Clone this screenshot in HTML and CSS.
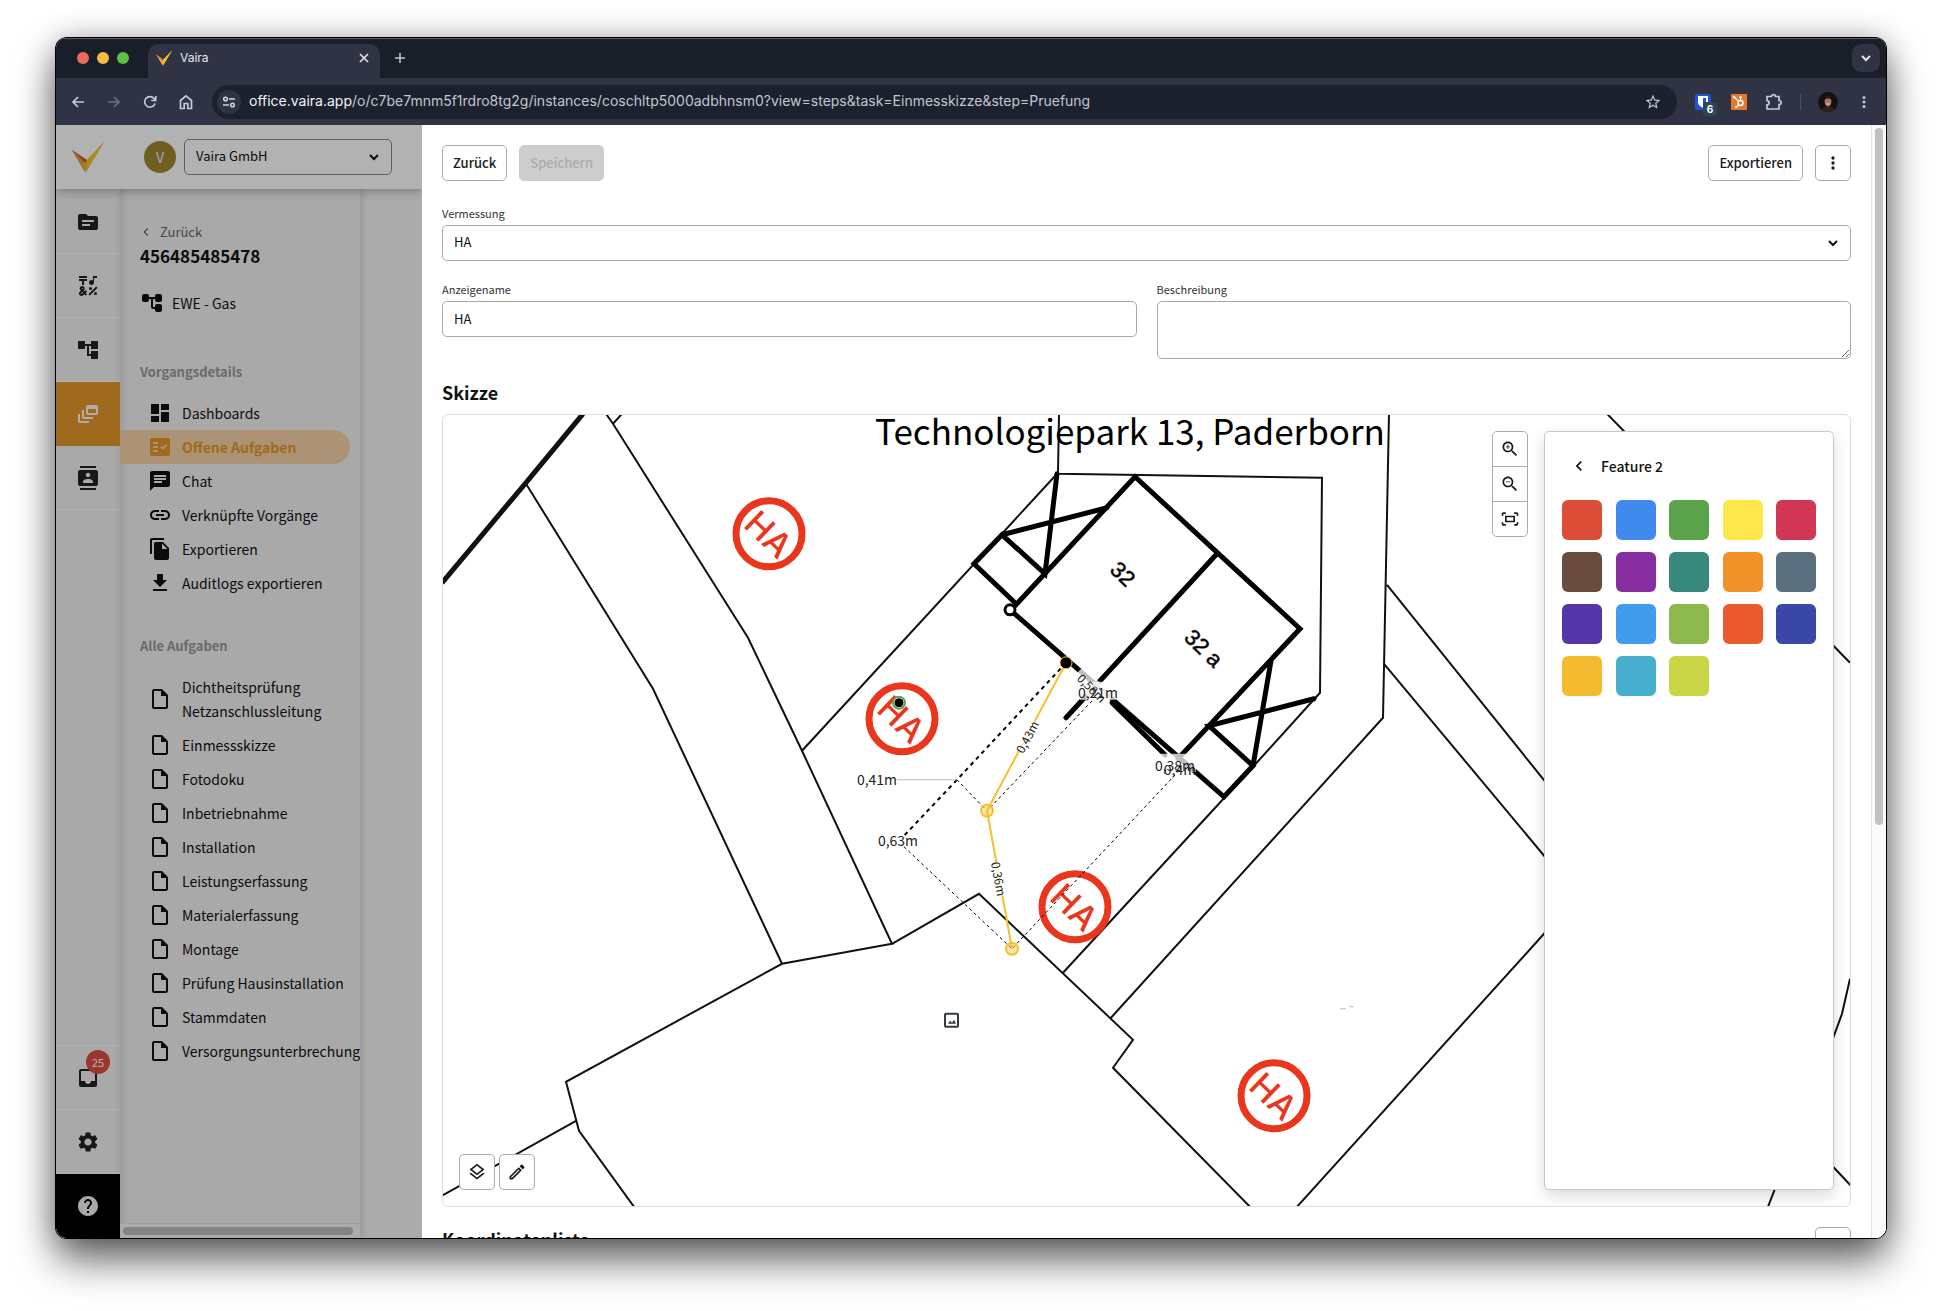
FILE: index.html
```html
<!DOCTYPE html>
<html lang="de">
<head>
<meta charset="utf-8">
<title>Vaira</title>
<meta name="viewport" content="width=device-width, initial-scale=1">
<link rel="stylesheet" href="styles.css">
</head>
<body>
<svg class="defs" aria-hidden="true">
  <linearGradient id="gold" x1="0" y1="0" x2="1" y2="1"><stop offset="0" stop-color="#d9862b"/><stop offset="1" stop-color="#f3cf3a"/></linearGradient>
  <symbol id="logo" viewBox="0 0 32 32">
    <path d="M0 9l14 13-1 9z" fill="#e0742a"/>
    <path d="M0 9l15 10 17-18-18 30z" fill="url(#gold)"/>
    <path d="M15 19L32 1 14 31z" fill="#f4c430"/>
    <path d="M0 9l15 10-2 3z" fill="#d35f35"/>
  </symbol>
  <symbol id="doc" viewBox="0 0 24 24"><path d="M14 2H6c-1.1 0-1.99.9-1.99 2L4 20c0 1.1.89 2 1.99 2H18c1.1 0 2-.9 2-2V8l-6-6zM6 20V4h7v5h5v11H6z"/></symbol>
  <symbol id="tree" viewBox="0 0 24 24"><path d="M22 11V3h-7v3H9V3H2v8h7V8h2v10h4v3h7v-8h-7v3h-2V8h2v3z"/></symbol>
  <symbol id="tree-round" viewBox="0 0 24 24"><path d="M22 9V5c0-1.100-.9-2-2-2h-3c-1.100 0-2 .9-2 2v1H9V5c0-1.100-.9-2-2-2H4c-1.100 0-2 .9-2 2v4c0 1.100.9 2 2 2h3c1.100 0 2-.9 2-2V8h2v8c0 1.100.9 2 2 2h2v1c0 1.100.9 2 2 2h3c1.100 0 2-.9 2-2v-4c0-1.100-.9-2-2-2h-3c-1.100 0-2 .9-2 2v1h-2V8h2v1c0 1.100.9 2 2 2h3c1.100 0 2-.9 2-2z"/></symbol>
  <symbol id="more" viewBox="0 0 24 24"><circle cx="12" cy="6" r="2"/><circle cx="12" cy="12" r="2"/><circle cx="12" cy="18" r="2"/></symbol>
  <symbol id="left" viewBox="0 0 24 24"><path d="M15.410 7.410L14 6l-6 6 6 6 1.410-1.410L10.830 12z"/></symbol>
  <symbol id="down" viewBox="0 0 12 12"><path d="M2 4l4 4 4-4" fill="none" stroke="currentColor" stroke-width="2"/></symbol>
  <symbol id="ha" viewBox="-40 -40 80 80">
    <circle r="33" fill="none" stroke="#ea361c" stroke-width="7"/>
    <text class="ha-text" transform="rotate(44)" y="13">HA</text>
  </symbol>
</svg>

<div class="window">
  <header class="tabstrip">
    <div class="lights"><i class="red"></i><i class="amber"></i><i class="green"></i></div>
    <div class="tab">
      <svg class="i16"><use href="#logo"/></svg>
      <span class="tab-title">Vaira</span>
      <button class="bare" aria-label="Tab schließen"><svg class="i12" viewBox="0 0 12 12"><path d="M2 2l8 8M10 2l-8 8" fill="none" stroke="#e6e8f0" stroke-width="1.600"/></svg></button>
    </div>
    <button class="bare newtab" aria-label="Neuer Tab"><svg class="i12" viewBox="0 0 12 12"><path d="M6 1v10M1 6h10" fill="none" stroke="#c5c9dc" stroke-width="1.500"/></svg></button>
    <button class="tabsearch" aria-label="Tabs durchsuchen"><svg class="i12"><use href="#down"/></svg></button>
  </header>

  <div class="toolbar">
    <nav class="navbtns">
      <button class="bare" aria-label="Zurück"><svg class="i16" viewBox="0 0 16 16"><path d="M14 8H3M8 3L3 8l5 5" class="ln"/></svg></button>
      <button class="bare faded" aria-label="Vorwärts"><svg class="i16" viewBox="0 0 16 16"><path d="M2 8h11M8 3l5 5-5 5" class="ln"/></svg></button>
      <button class="bare" aria-label="Neu laden"><svg class="i16" viewBox="0 0 16 16"><path d="M13 9.500A5.300 5.300 0 1 1 12 4.500L13.500 6M13.700 2v4.500H9.200" class="ln"/></svg></button>
      <button class="bare" aria-label="Startseite"><svg class="i16" viewBox="0 0 16 16"><path d="M2.500 6.500L8 1.800l5.500 4.700v8H9.800V9.500H6.200v5H2.500z" class="ln"/></svg></button>
    </nav>
    <div class="omnibox">
      <span class="siteinfo"><svg class="i16" viewBox="0 0 16 16"><path d="M8 5h6M2 11h6" stroke="#d5d8e6" stroke-width="1.600"/><circle cx="4.500" cy="5" r="1.800" fill="none" stroke="#d5d8e6" stroke-width="1.500"/><circle cx="11.500" cy="11" r="1.800" fill="none" stroke="#d5d8e6" stroke-width="1.500"/></svg></span>
      <span class="url"><b>office.vaira.app</b>/o/c7be7mnm5f1rdro8tg2g/instances/coschltp5000adbhnsm0?view=steps&amp;task=Einmesskizze&amp;step=Pruefung</span>
      <svg class="i18 star" viewBox="0 0 24 24"><path d="M22 9.240l-7.190-.62L12 2 9.190 8.630 2 9.240l5.460 4.730L5.820 21 12 17.270 18.180 21l-1.630-7.030L22 9.240zM12 15.400l-3.760 2.270 1-4.280-3.320-2.880 4.380-.38L12 6.100l1.710 4.040 4.380.38-3.320 2.880 1 4.280L12 15.400z"/></svg>
    </div>
    <div class="extensions">
      <span class="ext"><svg class="i16" viewBox="0 0 16 16"><rect width="16" height="16" rx="2" fill="#1f54d3"/><path d="M3 2h10v6c0 3-3 5-5 6-2-1-5-3-5-6z" fill="#fff"/><path d="M8 4h3v4c0 2-2 3-3 4z" fill="#1f54d3"/></svg><em class="count">6</em></span>
      <svg class="i16" viewBox="0 0 16 16"><path fill="#e8762c" d="M0 0h16v16H0z"/><circle cx="9.500" cy="9" r="2.500" fill="none" stroke="#fff" stroke-width="1.500"/><path d="M9.500 6.500V3M3 3l4.700 4.200M7.700 11L5.500 13" stroke="#fff" stroke-width="1.200"/><circle cx="3" cy="3" r="1.200" fill="#fff"/><circle cx="5.200" cy="13" r="1.200" fill="#fff"/><circle cx="9.500" cy="3.200" r="1.200" fill="#fff"/></svg>
      <svg class="i18" viewBox="0 0 18 18"><path d="M2 3.500h4.500a2 1.800 0 0 1 4 0H14v4a2 2 0 0 1 0 4.200V16H2v-4.200a2 2 0 0 0 0-4.200z" class="ln"/></svg>
      <i class="divider"></i>
      <svg class="i20" viewBox="0 0 20 20"><circle cx="10" cy="10" r="10" fill="#15110f"/><path d="M4 18c1-3 3-4 6-4s5 1 6 4c-3 3-9 3-12 0z" fill="#262423"/><ellipse cx="10" cy="9.500" rx="3.400" ry="5" fill="#a97459"/><path d="M6.500 8c0-5 7-5 7 0-1-2-6-2-7 0z" fill="#1c1411"/><path d="M8 12h4" stroke="#ead2c4"/></svg>
      <svg class="i18 lilac"><use href="#more"/></svg>
    </div>
  </div>

  <div class="page">
    <div class="app">
      <header class="appbar">
        <svg class="i32"><use href="#logo"/></svg>
        <span class="avatar">V</span>
        <div class="select org"><select aria-label="Organisation"><option>Vaira GmbH</option></select><svg class="i12"><use href="#down"/></svg></div>
      </header>
      <div class="appbody">
        <nav class="rail">
          <a href="#" aria-label="Projekte"><svg class="i24" viewBox="0 0 24 24"><path d="M20 6h-8l-2-2H4c-1.100 0-1.990.9-1.990 2L2 18c0 1.100.9 2 2 2h16c1.100 0 2-.9 2-2V8c0-1.100-.9-2-2-2zm-6 10H6v-2h8v2zm4-4H6v-2h12v2z"/></svg></a>
          <a href="#" aria-label="Symbole"><svg class="i24" viewBox="0 0 24 24"><path d="M3 2h8v2H3zM6 11h2V7h3V5H3v2h3zM12.400 20.180l7.780-7.780 1.420 1.420-7.780 7.780z"/><circle cx="14.500" cy="14.500" r="1.500"/><circle cx="19.500" cy="19.500" r="1.500"/><path d="M15.500 11c1.380 0 2.500-1.120 2.500-2.500V4h3V2h-4v4.510c-.42-.32-.93-.51-1.500-.51C14.120 6 13 7.120 13 8.500s1.120 2.500 2.500 2.500zM9.740 15.960l-1.410 1.410-.71-.71.35-.35c.98-.98.98-2.560 0-3.540-.49-.49-1.130-.73-1.770-.73-.64 0-1.280.24-1.770.73-.98.98-.98 2.560 0 3.540l.35.35-1.060 1.060c-.98.98-.98 2.560 0 3.540.5.500 1.140.74 1.780.74s1.280-.24 1.770-.73l1.060-1.060 1.410 1.410 1.410-1.410-1.410-1.410 1.410-1.410zM5.850 14.200c.12-.12.26-.15.35-.15s.23.03.35.15c.19.2.19.51 0 .71l-.35.35-.35-.36c-.19-.19-.19-.51 0-.7zm0 5.650c-.12.12-.26.15-.35.15s-.23-.03-.35-.15c-.19-.19-.19-.51 0-.71l1.060-1.060.71.71z"/></svg></a>
          <a href="#" aria-label="Prozesse"><svg class="i24"><use href="#tree"/></svg></a>
          <a href="#" class="on" aria-label="Vorgänge"><svg class="i24" viewBox="0 0 24 24"><path d="M8 8H6v7c0 1.100.9 2 2 2h9v-2H8V8zM20 3h-8c-1.100 0-2 .9-2 2v6c0 1.100.9 2 2 2h8c1.100 0 2-.9 2-2V5c0-1.100-.9-2-2-2zm0 8h-8V7h8v4zM4 12H2v7c0 1.100.9 2 2 2h9v-2H4v-7z"/></svg></a>
          <a href="#" aria-label="Kontakte"><svg class="i24" viewBox="0 0 24 24"><path d="M20 0H4v2h16V0zM4 24h16v-2H4v2zM20 4H4c-1.100 0-2 .9-2 2v12c0 1.100.9 2 2 2h16c1.100 0 2-.9 2-2V6c0-1.100-.9-2-2-2zm-8 2.750c1.240 0 2.250 1.010 2.250 2.250s-1.010 2.250-2.250 2.250S9.750 10.240 9.750 9 10.760 6.750 12 6.750zM17 17H7v-1.500c0-1.670 3.330-2.500 5-2.500s5 .83 5 2.500V17z"/></svg></a>
          <a href="#" class="inbox" aria-label="Posteingang"><svg class="i24" viewBox="0 0 24 24"><path d="M19 3H4.990c-1.110 0-1.980.89-1.980 2L3 19c0 1.100.88 2 1.990 2H19c1.100 0 2-.9 2-2V5c0-1.110-.9-2-2-2zm0 12h-4c0 1.660-1.350 3-3 3s-3-1.340-3-3H4.990V5H19v10z"/></svg><span class="badge">25</span></a>
          <a href="#" aria-label="Einstellungen"><svg class="i24" viewBox="0 0 24 24"><path d="M19.140 12.940c.04-.3.060-.61.060-.94 0-.32-.02-.64-.07-.94l2.030-1.580c.18-.14.23-.41.12-.61l-1.920-3.320c-.12-.22-.37-.29-.59-.22l-2.390.96c-.5-.38-1.030-.7-1.620-.94l-.36-2.540c-.04-.24-.24-.41-.48-.41h-3.840c-.24 0-.43.17-.47.41l-.36 2.540c-.59.24-1.130.57-1.620.94l-2.390-.96c-.22-.08-.47 0-.59.22L2.740 8.870c-.12.21-.08.47.12.61l2.030 1.580c-.05.3-.09.63-.09.94s.02.64.07.94l-2.030 1.580c-.18.14-.23.41-.12.61l1.920 3.320c.12.22.37.29.59.22l2.390-.96c.5.38 1.030.7 1.620.94l.36 2.540c.05.24.24.41.48.41h3.840c.24 0 .44-.17.47-.41l.36-2.540c.59-.24 1.130-.56 1.620-.94l2.390.96c.22.08.47 0 .59-.22l1.920-3.320c.12-.22.07-.47-.12-.61l-2.010-1.580zM12 15.600c-1.980 0-3.600-1.620-3.600-3.600s1.620-3.600 3.600-3.600 3.600 1.620 3.600 3.600-1.620 3.600-3.600 3.600z"/></svg></a>
          <a href="#" class="help" aria-label="Hilfe"><svg class="i24" viewBox="0 0 24 24"><path d="M12 2C6.480 2 2 6.480 2 12s4.480 10 10 10 10-4.480 10-10S17.520 2 12 2zm1 17h-2v-2h2v2zm2.070-7.750l-.9.92C13.450 12.900 13 13.500 13 15h-2v-.5c0-1.100.45-2.100 1.170-2.830l1.240-1.260c.37-.36.59-.86.59-1.410 0-1.100-.9-2-2-2s-2 .9-2 2H8c0-2.210 1.790-4 4-4s4 1.790 4 4c0 .88-.36 1.680-.93 2.250z"/></svg></a>
        </nav>
        <aside class="side">
          <div class="side-scroll">
            <a href="#" class="back"><svg class="i16"><use href="#left"/></svg>Zurück</a>
            <h1 class="case-no">456485485478</h1>
            <p class="process"><svg class="i24"><use href="#tree-round"/></svg>EWE - Gas</p>
            <h2 class="group">Vorgangsdetails</h2>
            <ul class="menu">
              <li><a href="#"><svg class="i24" viewBox="0 0 24 24"><path d="M3 13h8V3H3v10zm0 8h8v-6H3v6zm10 0h8V11h-8v10zm0-18v6h8V3h-8z"/></svg>Dashboards</a></li>
              <li><a href="#" class="current"><svg class="i24" viewBox="0 0 24 24"><path d="M20 3H4c-1.100 0-2 .9-2 2v14c0 1.100.9 2 2 2h16c1.100 0 2-.9 2-2V5c0-1.100-.9-2-2-2zM10 17H5v-2h5v2zm0-4H5v-2h5v2zm0-4H5V7h5v2zm4.820 6L12 12.160l1.410-1.410 1.410 1.420L17.990 9l1.420 1.420L14.820 15z"/></svg>Offene Aufgaben</a></li>
              <li><a href="#"><svg class="i24" viewBox="0 0 24 24"><path d="M20 2H4c-1.100 0-1.990.9-1.990 2L2 22l4-4h14c1.100 0 2-.9 2-2V4c0-1.100-.9-2-2-2zM6 9h12v2H6V9zm8 5H6v-2h8v2zm4-6H6V6h12v2z"/></svg>Chat</a></li>
              <li><a href="#"><svg class="i24" viewBox="0 0 24 24"><path d="M3.900 12c0-1.710 1.390-3.100 3.100-3.100h4V7H7c-2.760 0-5 2.240-5 5s2.240 5 5 5h4v-1.900H7c-1.710 0-3.100-1.390-3.100-3.100zM8 13h8v-2H8v2zm9-6h-4v1.900h4c1.710 0 3.100 1.390 3.100 3.100s-1.390 3.100-3.100 3.100h-4V17h4c2.760 0 5-2.240 5-5s-2.240-5-5-5z"/></svg>Verknüpfte Vorgänge</a></li>
              <li><a href="#"><svg class="i24" viewBox="0 0 24 24"><path d="M16 1H4c-1.100 0-2 .9-2 2v14h2V3h12V1zm-1 4l6 6v10c0 1.100-.9 2-2 2H7.990C6.890 23 6 22.100 6 21l.01-14c0-1.100.89-2 1.990-2h7zm-1 7h5.500L14 6.500V12z"/></svg>Exportieren</a></li>
              <li><a href="#"><svg class="i24" viewBox="0 0 24 24"><path d="M19 9h-4V3H9v6H5l7 7 7-7zM5 18v2h14v-2H5z"/></svg>Auditlogs exportieren</a></li>
            </ul>
            <h2 class="group">Alle Aufgaben</h2>
            <ul class="menu">
              <li><a href="#"><svg class="i24"><use href="#doc"/></svg>Dichtheitsprüfung<br>Netzanschlussleitung</a></li>
              <li><a href="#"><svg class="i24"><use href="#doc"/></svg>Einmessskizze</a></li>
              <li><a href="#"><svg class="i24"><use href="#doc"/></svg>Fotodoku</a></li>
              <li><a href="#"><svg class="i24"><use href="#doc"/></svg>Inbetriebnahme</a></li>
              <li><a href="#"><svg class="i24"><use href="#doc"/></svg>Installation</a></li>
              <li><a href="#"><svg class="i24"><use href="#doc"/></svg>Leistungserfassung</a></li>
              <li><a href="#"><svg class="i24"><use href="#doc"/></svg>Materialerfassung</a></li>
              <li><a href="#"><svg class="i24"><use href="#doc"/></svg>Montage</a></li>
              <li><a href="#"><svg class="i24"><use href="#doc"/></svg>Prüfung Hausinstallation</a></li>
              <li><a href="#"><svg class="i24"><use href="#doc"/></svg>Stammdaten</a></li>
              <li><a href="#"><svg class="i24"><use href="#doc"/></svg>Versorgungsunterbrechung</a></li>
            </ul>
          </div>
          <div class="hscroll"><i></i></div>
        </aside>
      </div>
      <div class="backdrop"></div>
    </div>

    <main class="drawer">
      <div class="drawer-body">
        <div class="actions">
          <button class="btn">Zurück</button>
          <button class="btn disabled" disabled>Speichern</button>
          <span class="spacer"></span>
          <button class="btn">Exportieren</button>
          <button class="btn icon" aria-label="Mehr"><svg class="i20"><use href="#more"/></svg></button>
        </div>
        <div class="field">
          <label for="survey">Vermessung</label>
          <div class="select"><select id="survey"><option>HA</option></select><svg class="i12"><use href="#down"/></svg></div>
        </div>
        <div class="pair">
          <div class="field"><label for="name">Anzeigename</label><input id="name" type="text" value="HA"></div>
          <div class="field"><label for="desc">Beschreibung</label><textarea id="desc"></textarea></div>
        </div>
        <h2 class="title">Skizze</h2>
        <section class="sketch">
          <svg class="map" viewBox="443 414 1407 791" preserveAspectRatio="xMidYMid slice">
            <g class="parcel">
              <path d="M583 413L525 483L442 582" stroke-width="5"/>
              <path d="M606 413L613 423L748 637L802 750L892 943L782 963L566 1081L579 1130L634 1206M613 423L622 413M576 1120L442 1195"/>
              <path d="M526 483L653 688L782 963M802 750L1058 472L1059 413M1058 473L1322 477L1320 692L1253 766L1063 972"/>
              <path d="M892 943L979 893L1133 1039L1113 1067L1250 1206M1389 413L1383 717L1111 1017M1387 584L1600 849M1384 663L1600 922M1607 413L1850 662M1297 1206L1544 933L1600 870"/>
              <path d="M1850 978L1842 1013L1834 1035L1768 1206M1820 1152L1851 1185"/>
            </g>
            <path d="M1340 1008h6M1349 1006h5" stroke="#bbb" stroke-width="1"/>
            <g class="wall">
              <path d="M1015 605L1135 476L1300 628L1178 758M1217 553L1066 717M1010 609L1224 796L1253 765L1209 725L1314 698M1271 660L1253 765"/>
              <path d="M1015 602L974 563L1002 534L1045 573L1057 473M1002 534L1107 507"/>
              <path d="M1112 702L1165 754"/>
            </g>
            <text class="house" transform="translate(1123 573) rotate(44)" y="8">32</text>
            <text class="house" transform="translate(1204 647) rotate(44)" y="8">32 a</text>
            <text class="place" x="1130" y="444">Technologiepark 13, Paderborn</text>
            <use href="#ha" x="729" y="493" width="80" height="80"/>
            <use href="#ha" x="862" y="678" width="80" height="80"/>
            <use href="#ha" x="1035" y="866" width="80" height="80"/>
            <use href="#ha" x="1234" y="1055" width="80" height="80"/>
            <path class="dash bold" d="M1066 662L957 779L904 835"/>
            <path class="dash" d="M957 779L987 810L1095 697M904 846L1012 948L1178 771"/>
            <path d="M897 779H957" stroke="#bbbac2" stroke-width="1"/>
            <path class="pipe" d="M1066 662L987 810L1012 948"/>
            <circle class="node" cx="987" cy="810" r="6"/>
            <circle class="node" cx="1012" cy="948" r="6"/>
            <circle cx="1066" cy="662" r="6" fill="#000" stroke="#f5bf2f"/>
            <circle cx="1010" cy="609" r="5" fill="#fff" stroke="#000" stroke-width="3"/>
            <circle cx="899" cy="702" r="5" fill="#000" stroke="#fff" stroke-width="1"/>
            <circle cx="899" cy="702" r="6" fill="none" stroke="#5aa44e" stroke-width="2"/>
            <g fill="#fff" fill-opacity=".75">
              <rect x="1080" y="681" width="36" height="18"/>
              <rect x="-21" y="-9" width="42" height="18" transform="translate(1092 687) rotate(45)"/>
              <rect x="1160" y="753" width="36" height="18"/>
              <rect x="-17" y="-6" width="34" height="12" transform="translate(1027 736) rotate(-62)"/>
              <rect x="-17" y="-6" width="34" height="12" transform="translate(999 878) rotate(80)"/>
            </g>
            <g class="measure">
              <text x="877" y="784">0,41m</text>
              <text x="898" y="845">0,63m</text>
              <text x="1098" y="697">0,21m</text>
              <text x="1175" y="770">0,38m</text>
              <text x="1180" y="774">0,4m</text>
              <text class="small" transform="translate(1092 687) rotate(45)" y="5">0,58m</text>
              <text class="small" transform="translate(1027 736) rotate(-62)" y="5">0,43m</text>
              <text class="small" transform="translate(999 878) rotate(80)" y="5">0,36m</text>
            </g>
            <g fill="#fff" stroke="#333a40" stroke-width="2"><rect x="945" y="1013" width="13" height="13" rx="1"/><path d="M948 1023l2-3 2 2 2-3 2 4z" fill="#333a40" stroke="none"/></g>
          </svg>
          <div class="overlay">
            <div class="modes">
              <button class="btn icon" aria-label="Ebenen"><svg class="i20" viewBox="0 0 24 24"><path d="M11.990 18.540l-7.370-5.730L3 14.070l9 7 9-7-1.630-1.270-7.380 5.740zM12 16l7.360-5.730L21 9l-9-7-9 7 1.630 1.270L12 16zm0-11.470L17.740 9 12 13.470 6.260 9 12 4.530z"/></svg></button>
              <button class="btn icon" aria-label="Bearbeiten"><svg class="i20" viewBox="0 0 24 24"><path d="M14.060 9.020l.92.92L5.920 19H5v-.92l9.060-9.060M17.660 3c-.25 0-.51.1-.7.29l-1.830 1.830 3.750 3.750 1.830-1.830c.39-.39.39-1.020 0-1.410l-2.340-2.340c-.2-.2-.45-.29-.71-.29zm-3.600 3.190L3 17.250V21h3.750L17.810 9.940l-3.750-3.750z"/></svg></button>
            </div>
            <div class="zoom">
              <button class="btn icon" aria-label="Vergrößern"><svg class="i20" viewBox="0 0 24 24"><path d="M15.500 14h-.79l-.28-.27C15.410 12.590 16 11.110 16 9.500 16 5.910 13.090 3 9.500 3S3 5.910 3 9.500 5.910 16 9.500 16c1.610 0 3.090-.59 4.230-1.570l.27.28v.79l5 4.990L20.490 19l-4.990-5zm-6 0C7.010 14 5 11.990 5 9.500S7.010 5 9.500 5 14 7.010 14 9.500 11.990 14 9.500 14zM12 10h-2v2H9v-2H7V9h2V7h1v2h2v1z"/></svg></button>
              <button class="btn icon" aria-label="Verkleinern"><svg class="i20" viewBox="0 0 24 24"><path d="M15.500 14h-.79l-.28-.27C15.410 12.590 16 11.110 16 9.500 16 5.910 13.090 3 9.500 3S3 5.910 3 9.500 5.910 16 9.500 16c1.610 0 3.090-.59 4.230-1.570l.27.28v.79l5 4.990L20.490 19l-4.990-5zm-6 0C7.010 14 5 11.990 5 9.500S7.010 5 9.500 5 14 7.010 14 9.500 11.990 14 9.500 14zM7 9h5v1H7z"/></svg></button>
              <button class="btn icon" aria-label="Einpassen"><svg class="i20" viewBox="0 0 24 24"><path d="M17 4h3c1.100 0 2 .9 2 2v2h-2V6h-3V4zM4 8V6h3V4H4c-1.100 0-2 .9-2 2v2h2zm16 8v2h-3v2h3c1.100 0 2-.9 2-2v-2h-2zM7 18H4v-2H2v2c0 1.100.9 2 2 2h3v-2zM18 8H6v8h12V8zm-2 6H8v-4h8v4z"/></svg></button>
            </div>
            <div class="panel">
              <div class="panel-head"><button class="bare" aria-label="Zurück"><svg class="i20"><use href="#left"/></svg></button><h3>Feature 2</h3></div>
              <div class="swatches">
                <button aria-label="Rot" class="sw c1"></button><button aria-label="Blau" class="sw c2"></button><button aria-label="Grün" class="sw c3"></button><button aria-label="Gelb" class="sw c4"></button><button aria-label="Pink" class="sw c5"></button>
                <button aria-label="Braun" class="sw c6"></button><button aria-label="Violett" class="sw c7"></button><button aria-label="Petrol" class="sw c8"></button><button aria-label="Orange" class="sw c9"></button><button aria-label="Blaugrau" class="sw c10"></button>
                <button aria-label="Dunkelviolett" class="sw c11"></button><button aria-label="Hellblau" class="sw c12"></button><button aria-label="Hellgrün" class="sw c13"></button><button aria-label="Dunkelorange" class="sw c14"></button><button aria-label="Indigo" class="sw c15"></button>
                <button aria-label="Bernstein" class="sw c16"></button><button aria-label="Cyan" class="sw c17"></button><button aria-label="Limette" class="sw c18"></button>
              </div>
            </div>
          </div>
        </section>
        <div class="list-head"><h2 class="title">Koordinatenliste</h2><button class="btn icon" aria-label="Mehr"></button></div>
      </div>
      <div class="vscroll"><i></i></div>
    </main>
  </div>
</div>
</body>
</html>
```
FILE: styles.css
```css
* { box-sizing: border-box; }

body {
  margin: 0;
  height: 100vh;
  padding: 38px 56px 73px;
  background: #fff;
  color: #111;
  font: 14px/24px "Noto Sans CJK SC", "Noto Sans", sans-serif;
  overflow: hidden;
}

h1, h2, h3, p, ul { margin: 0; padding: 0; }
ul { list-style: none; }
a { color: inherit; text-decoration: none; }
button, input, select, textarea { font: inherit; color: inherit; }
svg { display: block; flex: none; fill: currentColor; }

.defs { position: absolute; width: 0; height: 0; }
.i12 { width: 12px; height: 12px; }
.i16 { width: 16px; height: 16px; }
.i18 { width: 18px; height: 18px; }
.i20 { width: 20px; height: 20px; }
.i24 { width: 24px; height: 24px; }
.i32 { width: 32px; height: 32px; }
.ln { fill: none; stroke: currentColor; stroke-width: 1.7; }
.bare { display: flex; padding: 0; border: 0; background: none; }

.window {
  display: flex;
  flex-direction: column;
  height: 100%;
  border-radius: 11px;
  box-shadow: 0 0 0 1px #000, 0 0 30px rgba(0, 0, 0, .25), 0 22px 40px rgba(0, 0, 0, .6);
  overflow: hidden;
}

/* browser chrome */
.tabstrip {
  display: flex;
  align-items: flex-start;
  height: 40px;
  padding: 6px 6px 0 21px;
  background: #191e29;
  box-shadow: inset 0 1px #565b66;
  color: #e6e8f0;
  font-family: Inter, sans-serif;
}
.lights { display: flex; gap: 8px; padding: 8px 19px 0 0; }
.lights i { width: 12px; height: 12px; border-radius: 50%; }
.red { background: #ed6a5e; }
.amber { background: #f5bd45; }
.green { background: #5bc043; }
.tab {
  display: flex;
  align-items: center;
  gap: 8px;
  width: 232px;
  height: 34px;
  padding: 0 10px 6px 8px;
  border-radius: 10px 10px 0 0;
  background: #2f3343;
  font-size: 12px;
}
.tab-title { flex: 1; }
.newtab { padding: 8px 14px; }
.tabsearch {
  display: grid;
  place-items: center;
  width: 28px;
  height: 28px;
  margin-left: auto;
  padding: 0;
  border: 0;
  border-radius: 9px;
  background: #2f3343;
}

.toolbar {
  display: flex;
  align-items: center;
  height: 47px;
  padding: 0 13px 0 14px;
  background: #2f3343;
  color: #c5c9e2;
  font-family: Inter, sans-serif;
}
.navbtns { display: flex; gap: 20px; margin-right: 18px; }
.faded { opacity: .4; }
.omnibox {
  display: flex;
  flex: 1;
  align-items: center;
  gap: 8px;
  height: 34px;
  padding: 0 15px 0 5px;
  border-radius: 17px;
  background: #1c212e;
}
.siteinfo { display: grid; place-items: center; width: 24px; height: 24px; border-radius: 50%; background: #2f3343; }
.url { flex: 1; padding-bottom: 2px; color: #c3c6d2; font-size: 14px; white-space: nowrap; overflow: hidden; }
.url b { font-weight: 400; color: #f2f3f8; }
.star { color: #c3c6d2; }
.extensions { display: flex; align-items: center; gap: 18px; padding-left: 18px; }
.ext { position: relative; margin-right: 2px; }
.count {
  position: absolute;
  left: 8px;
  top: 8px;
  width: 14px;
  height: 14px;
  border-radius: 3px;
  background: #2c4655;
  color: #fff;
  font: 700 10px/14px Inter, sans-serif;
  text-align: center;
}
.divider { width: 1px; height: 16px; background: #4b5064; }
.lilac { color: #c5c9e2; }
.extensions > :nth-child(n+4) { margin-left: -1px; }

/* application behind the drawer */
.page { display: flex; flex: 1; min-height: 0; background: #fff; }
.app { position: relative; display: flex; flex-direction: column; width: 20%; background: #f7f7f7; overflow: hidden; }
.backdrop { position: absolute; inset: 0; z-index: 3; background: rgba(0, 0, 0, .3); }
.appbar {
  position: relative;
  z-index: 2;
  display: flex;
  align-items: center;
  height: 64px;
  padding: 0 16px;
  background: #fff;
  box-shadow: 0 2px 10px rgba(0, 0, 0, .3);
}
.avatar {
  width: 32px;
  height: 32px;
  margin: 0 8px 0 40px;
  border-radius: 50%;
  background: #a08a30;
  color: #eee;
  line-height: 32px;
  text-align: center;
}
.org { width: 208px; }
.appbody { display: flex; flex: 1; min-height: 0; }

.rail { display: flex; flex-direction: column; width: 64px; padding-top: 1px; background: #f2f2f2; color: #222; }
.rail a { position: relative; display: grid; place-items: center; height: 64px; border-bottom: 1px solid #fff; }
.rail .on { border: 0; background: #e5992b; color: #fff; }
.rail .inbox { margin-top: auto; height: 65px; border-top: 1px solid #fff; }
.rail .help { border: 0; background: #000; color: #fff; }
.help svg, .on svg { opacity: .95; }
.badge {
  position: absolute;
  left: 30px;
  top: 4px;
  width: 24px;
  height: 24px;
  border-radius: 50%;
  background: #dc5044;
  color: #fff;
  font-size: 11px;
  text-align: center;
}

.side {
  display: flex;
  flex-direction: column;
  width: 240px;
  background: #f3f3f3;
  box-shadow: 2px 0 8px rgba(0, 0, 0, .15), inset 6px 0 8px -4px rgba(0, 0, 0, .12);
  overflow: hidden;
}
.side-scroll { flex: 1; padding-top: 31px; overflow: hidden; white-space: nowrap; }
.back { display: flex; align-items: center; gap: 6px; height: 24px; padding-left: 18px; color: #666; font-size: 13px; }
.case-no { padding-left: 20px; font-size: 17px; font-weight: 700; line-height: 24px; }
.process { display: flex; align-items: center; gap: 8px; height: 24px; margin: 23px 0 45px; padding-left: 20px; }
.group { padding-left: 20px; color: #999; font-size: 13px; font-weight: 700; line-height: 24px; }
.menu { padding: 12px 0 34px; }
.menu a {
  display: grid;
  grid-template-columns: 24px 1fr;
  align-items: center;
  column-gap: 10px;
  margin-right: 10px;
  padding: 5px 0 5px 28px;
  border-radius: 0 17px 17px 0;
}
.menu svg { grid-row: 1 / span 2; }
.menu .current { background: #f7d3a8; color: #e5992b; font-weight: 700; }
.hscroll { height: 15px; padding: 3px; border-top: 1px solid #e6e6e6; background: #f7f7f7; }
.hscroll i { display: block; width: 230px; height: 8px; border-radius: 4px; background: #bdbdbd; }

/* drawer */
.drawer { display: flex; flex: 1; min-width: 0; min-height: 0; background: #fff; }
.drawer-body { flex: 1; padding: 20px 20px 0; overflow: hidden; }
.vscroll { width: 15px; padding: 3px; border-left: 1px solid #e3e3e3; background: #fafafa; }
.vscroll i { display: block; width: 8px; height: 63%; border-radius: 4px; background: #c1c1c1; }
.actions { display: flex; gap: 12px; margin-bottom: 20px; }
.spacer { flex: 1; }
.btn {
  height: 36px;
  padding: 0 10px 1px;
  border: 1px solid #aaa;
  border-radius: 5px;
  background: #fff;
  color: #1a1a1a;
  font-size: 13px;
  font-weight: 500;
  line-height: 24px;
}
.btn.disabled { border-color: #cdcdcd; background: #cdcdcd; color: #aaa; }
.btn.icon { display: grid; place-items: center; width: 36px; padding: 0; }
.field { display: flex; flex-direction: column; }
.field label { color: #333; font-size: 11px; line-height: 24px; }
.field input, select, textarea {
  width: 100%;
  height: 36px;
  padding: 0 11px 2px;
  border: 1px solid #a8a8a8;
  border-radius: 5px;
  background: #fff;
  font-size: 13px;
}
.field textarea { height: 58px; resize: vertical; display: block; }
.select { position: relative; }
.select select { appearance: none; display: block; }
.select svg { position: absolute; right: 12px; top: 12px; pointer-events: none; }
.org select { border-color: #888; }
.pair { display: grid; grid-template-columns: 1fr 1fr; gap: 20px; margin: 16px 0 21px; }
.title { font-size: 18px; font-weight: 700; line-height: 24px; }

.sketch {
  position: relative;
  aspect-ratio: 16 / 9;
  margin: 10px 0 20px;
  border: 1px solid #ddd;
  border-radius: 6px;
  overflow: hidden;
}
.map { position: absolute; inset: 0; width: 100%; height: 100%; }
.overlay { position: absolute; inset: 16px; display: flex; align-items: flex-start; gap: 16px; }
.modes { display: flex; flex: 1; align-self: flex-end; gap: 4px; }
.zoom { display: flex; flex-direction: column; }
.zoom .btn { border-radius: 0; }
.zoom .btn + .btn { margin-top: -1px; }
.zoom .btn:first-child { border-radius: 5px 5px 0 0; }
.zoom .btn:last-child { border-radius: 0 0 5px 5px; }
.panel {
  align-self: stretch;
  width: 290px;
  padding: 16px 17px;
  border: 1px solid #c8c8c8;
  border-radius: 5px;
  background: #fff;
  box-shadow: 0 6px 16px rgba(0, 0, 0, .15);
}
.panel-head { display: flex; align-items: center; gap: 12px; height: 36px; margin-bottom: 16px; padding-left: 7px; }
.panel-head h3 { font-size: 14px; font-weight: 500; }
.swatches { display: grid; grid-template-columns: repeat(5, 40px); justify-content: space-between; row-gap: 12px; }
.sw { height: 40px; padding: 0; border: 0; border-radius: 6px; }
.c1 { background: #dd4c36; } .c2 { background: #3f8aec; } .c3 { background: #5aa24c; }
.c4 { background: #fce74b; } .c5 { background: #d13656; } .c6 { background: #6a4c3f; }
.c7 { background: #862ea0; } .c8 { background: #38887b; } .c9 { background: #f09228; }
.c10 { background: #5b707e; } .c11 { background: #5536a8; } .c12 { background: #419cee; }
.c13 { background: #8db84d; } .c14 { background: #ea5b2b; } .c15 { background: #3948a7; }
.c16 { background: #f5bb30; } .c17 { background: #48aece; } .c18 { background: #c8d645; }
.list-head { display: flex; justify-content: space-between; }

.parcel { fill: none; stroke: #111; stroke-width: 2; }
.wall { fill: none; stroke: #000; stroke-width: 5; stroke-linecap: round; }
.dash { fill: none; stroke: #000; stroke-width: 1; stroke-dasharray: 3 3; }
.dash.bold { stroke-width: 2; stroke-dasharray: 4 4; }
.pipe { fill: none; stroke: #f5bf2f; stroke-width: 2; }
.node { fill: rgba(245, 191, 47, .4); stroke: #f5bf2f; stroke-width: 2; }
.ha-text { fill: #ea361c; font: 500 34px Inter, sans-serif; text-anchor: middle; }
.house { fill: #000; stroke: #000; stroke-width: 1; stroke-opacity: .5; font: 22px "Liberation Sans", sans-serif; text-anchor: middle; }
.place { font-size: 35px; text-anchor: middle; fill: #000; }
.measure { font-size: 14px; text-anchor: middle; fill: #222; }
.measure .small { font-size: 12px; }
```
